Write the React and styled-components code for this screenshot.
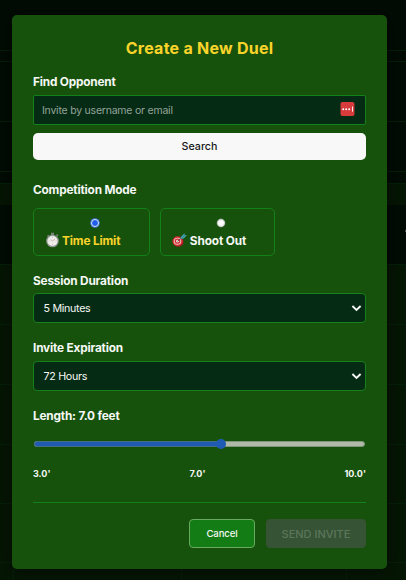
import React, { useState } from "react";
import styled, { createGlobalStyle } from "styled-components";

const GlobalStyle = createGlobalStyle`
  * { box-sizing: border-box; }
  body {
    margin: 0;
    background: #020b04;
    color: #f5f8f4;
    font-family: Inter, "Liberation Sans", sans-serif;
    overflow: hidden;
  }
  button, input { font-family: inherit; }
`;

const Page = styled.div`
  position: relative;
  height: 580px;
  overflow: hidden;
`;

const Backdrop = styled.div`
  display: flex;
  flex-direction: column;
  height: 100%;
`;

const Band = styled.div`
  flex: none;
  display: flex;
  height: ${(p) => p.$height}px;
  padding-left: ${(p) => p.$indent || 0}px;
  background: ${(p) => p.$tone};
  border-bottom: 1px solid ${(p) => p.$line || "#052008"};
`;

const Cell = styled.div`
  width: ${(p) => p.$width}px;
  border-left: 1px solid #052008;
`;

const Speck = styled.i`
  width: 1px;
  height: 2px;
  margin: 25px 0 0 auto;
  background: #4d564e;
`;

const Dialog = styled.form`
  position: absolute;
  top: 15px;
  left: 12px;
  width: 375px;
  height: 554px;
  padding: 21px 21px;
  display: flex;
  flex-direction: column;
  border-radius: 5px;
  background: #17520d;
  box-shadow: 0 2px 18px rgba(0, 0, 0, 0.5);
`;

const Title = styled.h2`
  margin: 0 0 11px;
  height: 24px;
  font-size: 16px;
  line-height: 24px;
  font-weight: 700;
  letter-spacing: 0.25px;
  text-align: center;
  color: #fad42a;
`;

const Group = styled.section`
  display: flex;
  flex-direction: column;
  height: ${(p) => p.$height}px;
`;

const Label = styled.label`
  height: ${(p) => p.$height || 24}px;
  line-height: 22px;
  font-size: 11.8px;
  font-weight: 700;
  letter-spacing: -0.18px;
  white-space: nowrap;
`;

const Field = styled.div`
  display: flex;
  align-items: center;
  justify-content: space-between;
  flex: none;
  height: 30px;
  padding: 0 ${(p) => p.$end}px 0 ${(p) => p.$start}px;
  border: 1px solid #14801a;
  border-radius: ${(p) => p.$radius}px;
  background: #052b14;
  font-size: 10.7px;
  letter-spacing: -0.3px;
`;

const TextInput = styled.input`
  flex: 1;
  min-width: 0;
  padding: 0;
  border: 0;
  outline: 0;
  background: transparent;
  color: #f5f8f4;
  font-size: 10.5px;
  letter-spacing: -0.22px;
  &::placeholder { color: #94a39a; opacity: 1; }
`;

const SearchButton = styled.button`
  height: 27px;
  margin-top: 8px;
  padding: 0;
  border: 0;
  border-radius: 5px;
  background: #f8f8f8;
  color: #161616;
  font-size: 10.7px;
  font-weight: 500;
  letter-spacing: 0;
`;

const Modes = styled.div`
  display: flex;
  gap: 10px;
`;

const ModeCard = styled.div`
  display: flex;
  flex-direction: column;
  width: ${(p) => p.$width}px;
  height: 48px;
  padding: 10px 11px 0;
  border: 1px solid #14801a;
  border-radius: 5px;
  color: ${(p) => (p.$active ? "#fad42a" : "#f5f8f4")};
`;

const Radio = styled.span`
  width: 8px;
  height: 8px;
  margin-left: ${(p) => p.$offset}px;
  border-radius: 50%;
  border: 1px solid ${(p) => (p.$active ? "#d5e1fc" : "#cbd3c9")};
  background: ${(p) => (p.$active ? "#1e5ef0" : "#fff")};
  background-clip: ${(p) => (p.$active ? "padding-box" : "border-box")};
  box-shadow: 0 0 0 ${(p) => (p.$active ? "0.8px #3f72dc" : "0.4px #6c8567")};
`;

const ModeName = styled.div`
  display: flex;
  align-items: center;
  gap: ${(p) => p.$gap}px;
  height: 18px;
  margin-top: 4px;
  line-height: 16px;
  font-size: 11.8px;
  font-weight: 700;
  white-space: nowrap;
  letter-spacing: ${(p) => p.$spacing}px;
  span { padding-top: 1px; }
`;

const Slider = styled.div`
  position: relative;
  height: 6px;
  margin: 14px 1px 0;
  border: 1px solid #7e957c;
  border-radius: 3px;
  background: #b1b9a8;
`;

const Fill = styled.div`
  height: 6px;
  margin: -1px 0 0 -1px;
  border: solid #466e87;
  border-width: 1px 0 1px 1px;
  border-radius: 3px 0 0 3px;
  background: #205bb3;
`;

const Thumb = styled.span`
  position: absolute;
  top: -3px;
  width: 10px;
  height: 10px;
  margin-left: -5px;
  border-radius: 50%;
  background: #205bb3;
`;

const Scale = styled.div`
  display: flex;
  justify-content: space-between;
  margin-top: 20px;
  height: 14px;
  line-height: 14px;
  font-size: 9px;
  font-weight: 700;
  letter-spacing: 0;
`;

const Footer = styled.footer`
  display: flex;
  justify-content: flex-end;
  gap: 11px;
  padding-top: 16px;
  border-top: 1px solid #14801a;
`;

const Action = styled.button`
  width: ${(p) => p.$width}px;
  height: 29px;
  padding: 0;
  border-radius: 4px;
  border: 1px solid #68aa60;
  background: #147c14;
  color: #f5f8f4;
  font-size: 9.6px;
  font-weight: 500;
  letter-spacing: -0.1px;
  &:disabled {
    border-color: #375335;
    background: #375335;
    color: #5c765b;
    font-size: 11px;
    letter-spacing: 0;
  }
`;

const Stopwatch = () => (
  <svg width="15" height="16" viewBox="0 0 15 16">
    <path d="M6 .8h3v3H6zM2 4l1.2-1.2 1.4 1.3-1.2 1.2zM11 3l1.3-.9 1.2 1.5-1.2 1z" fill="#77847a" />
    <circle cx="7.5" cy="9" r="6.3" fill="#8d9690" />
    <circle cx="7.5" cy="9" r="5.1" fill="#f0eeeb" />
    <path d="M7.5 5v1M7.5 12.2v1M3.6 9h1M10.5 9h1" stroke="#aaa" strokeWidth=".6" />
    <path d="M7.5 9 10 7" stroke="#d08f88" strokeWidth=".7" />
    <path d="M7.5 9 5.5 7.6" stroke="#a5a5a2" strokeWidth=".7" />
  </svg>
);

const Target = () => (
  <svg width="15" height="16" viewBox="0 0 15 16">
    <ellipse cx="6.4" cy="10" rx="5.2" ry="4.8" fill="#8f1c20" />
    <ellipse cx="5.6" cy="9.3" rx="5.2" ry="5" fill="#d32b30" />
    <ellipse cx="5.5" cy="9.2" rx="3.7" ry="3.5" fill="#efd3d0" />
    <ellipse cx="5.5" cy="9.2" rx="2.8" ry="2.6" fill="#cf2f32" />
    <circle cx="5.5" cy="9.2" r="1.4" fill="#f2dfdc" />
    <path d="m5.5 9.2 5-4" stroke="#693f44" strokeWidth="1" />
    <path d="m8.2 7 1-2.6 3.4-3.1.1 2 2.3-.1-3.3 3.2z" fill="#42a4ad" />
    <path d="m9.3 6 3.8-2.6" stroke="#257b91" strokeWidth=".7" />
  </svg>
);

const PasswordBadge = () => (
  <svg width="15" height="16" viewBox="0 0 15 16">
    <rect x=".5" width="14" height="14" rx="2" fill="#d73b3c" />
    <circle cx="3.2" cy="7.2" r="1" fill="#fff" />
    <circle cx="6.2" cy="7.2" r="1" fill="#fff" />
    <circle cx="9.2" cy="7.2" r="1" fill="#fff" />
    <path d="M12.5 4.5v5.2" stroke="#fff" strokeWidth=".9" />
  </svg>
);

const Chevron = () => (
  <svg width="11" height="8" viewBox="0 0 11 8">
    <path d="m1.4 2 4.1 3.9L9.6 2" fill="none" stroke="#f5f8f4" strokeWidth="1.9" />
  </svg>
);

const bands = [
  [51, "#020b04"],
  [11, "#020b04"],
  [60, "#020b04"],
  [50, "#020b04"],
  [12, "#020b04"],
  [21, "#051604", "#051604"],
  [60, "#020b04"],
  [60, "#051604"],
  [60, "#051604"],
  [60, "#051604"],
  [59, "#051604"],
  [59, "#051604"],
];

export default function App() {
  const [length] = useState(56.6);
  return (
    <Page>
      <GlobalStyle />
      <Backdrop>
        {bands.map(([height, tone, line], i) => (
          <Band key={i} $height={height} $tone={tone} $line={line}>
            {i === 6 && <Speck />}
          </Band>
        ))}
        <Band $height={40} $tone="#051604" $indent={13}>
          <Cell $width={169} />
          <Cell $width={167} />
          <Cell $width={60} />
        </Band>
      </Backdrop>
      <Dialog onSubmit={(e) => e.preventDefault()}>
        <Title>Create a New Duel</Title>
        <Group $height={108}>
          <Label>Find Opponent</Label>
          <Field $start={8} $end={10.5} $radius={2}>
            <TextInput placeholder="Invite by username or email" />
            <PasswordBadge />
          </Field>
          <SearchButton type="button">Search</SearchButton>
        </Group>
        <Group $height={91}>
          <Label $height={29}>Competition Mode</Label>
          <Modes>
            <ModeCard $width={117} $active>
              <Radio $offset={45.5} $active />
              <ModeName $gap={2} $spacing={-0.15}><Stopwatch /><span>Time Limit</span></ModeName>
            </ModeCard>
            <ModeCard $width={115}>
              <Radio $offset={45} />
              <ModeName $gap={2.8} $spacing={-0.1}><Target /><span>Shoot Out</span></ModeName>
            </ModeCard>
          </Modes>
        </Group>
        <Group $height={67}>
          <Label $height={23}>Session Duration</Label>
          <Field $start={9.5} $end={3} $radius={4}>5 Minutes<Chevron /></Field>
        </Group>
        <Group $height={68}>
          <Label>Invite Expiration</Label>
          <Field $start={9.5} $end={3} $radius={4}>72 Hours<Chevron /></Field>
        </Group>
        <Group $height={97}>
          <Label $height={22}>Length: 7.0 feet</Label>
          <Slider>
            <Fill style={{ width: `${length}%` }} />
            <Thumb style={{ left: `${length}%` }} />
          </Slider>
          <Scale><span>3.0'</span><span>7.0'</span><span>10.0'</span></Scale>
        </Group>
        <Footer>
          <Action $width={66} type="button">Cancel</Action>
          <Action $width={100} disabled>SEND INVITE</Action>
        </Footer>
      </Dialog>
    </Page>
  );
}
